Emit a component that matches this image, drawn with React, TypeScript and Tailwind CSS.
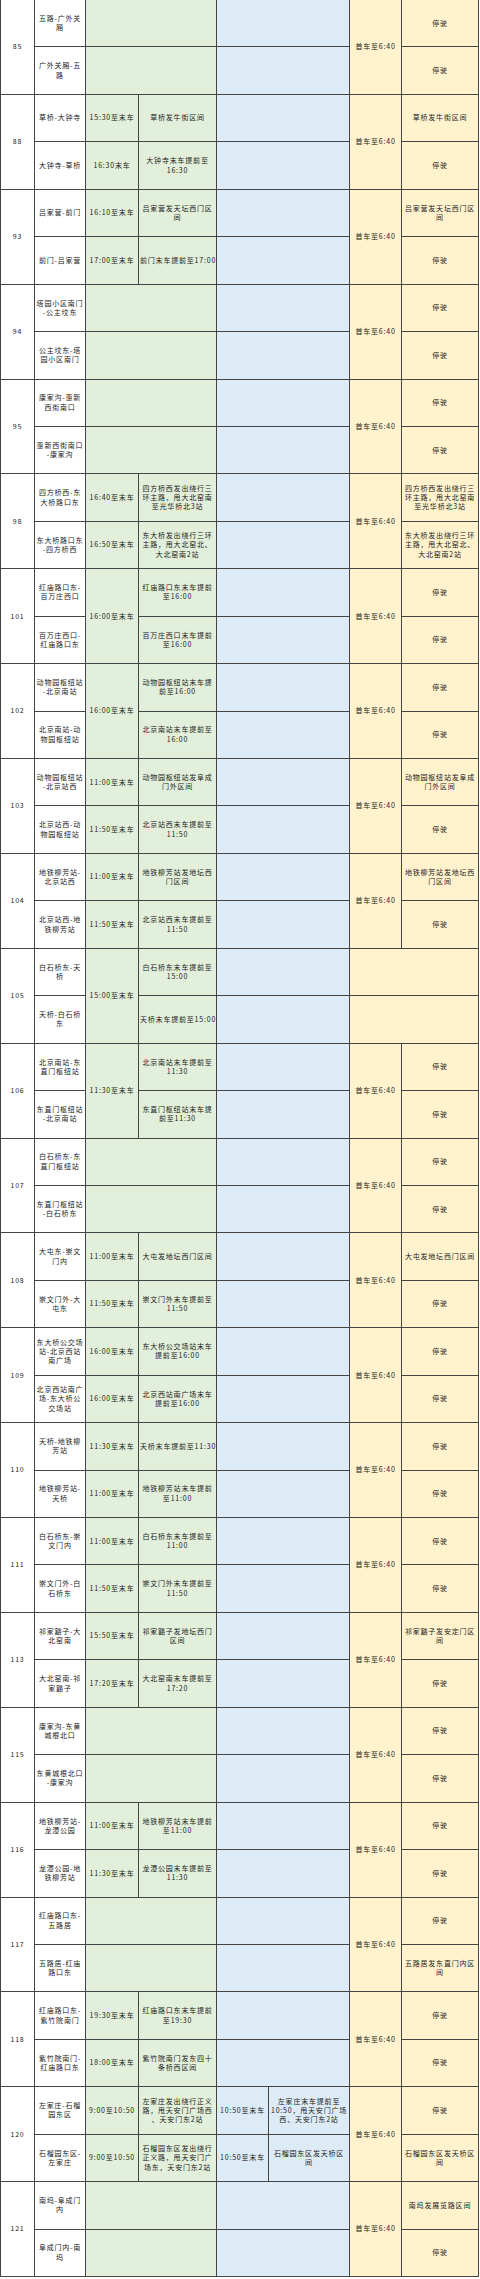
import React from 'react'

type Sub = {
  name: string
  /** green: time window + note; both absent = empty merged green cell */
  t?: string
  note?: string
  /** blue: only route 120 fills these */
  blueT?: string
  blueNote?: string
  /** last yellow column, defaults to 停驶 */
  c7?: string
}

type Route = {
  no: string
  /** time window shared by both directions */
  merged?: string
  /** yellow columns merged and left blank */
  yellowEmpty?: boolean
  rows: [Sub, Sub]
}

const ROUTES: Route[] = [
  { no: '85', rows: [{ name: '五路-广外关\n厢' }, { name: '广外关厢-五\n路' }] },
  {
    no: '88',
    rows: [
      { name: '草桥-大钟寺', t: '15:30至末车', note: '草桥发牛街区间', c7: '草桥发牛街区间' },
      { name: '大钟寺-草桥', t: '16:30末车', note: '大钟寺末车提前至\n16:30' }
    ]
  },
  {
    no: '93',
    rows: [
      { name: '吕家营-前门', t: '16:10至末车', note: '吕家营发天坛西门区\n间', c7: '吕家营发天坛西门区\n间' },
      { name: '前门-吕家营', t: '17:00至末车', note: '前门末车提前至17:00' }
    ]
  },
  { no: '94', rows: [{ name: '塔园小区南门\n-公主坟东' }, { name: '公主坟东-塔\n园小区南门' }] },
  { no: '95', rows: [{ name: '康家沟-惠新\n西街南口' }, { name: '惠新西街南口\n-康家沟' }] },
  {
    no: '98',
    rows: [
      {
        name: '四方桥西-东\n大桥路口东',
        t: '16:40至末车',
        note: '四方桥西发出绕行三\n环主路，甩大北窑南\n至光华桥北3站',
        c7: '四方桥西发出绕行三\n环主路，甩大北窑南\n至光华桥北3站'
      },
      {
        name: '东大桥路口东\n-四方桥西',
        t: '16:50至末车',
        note: '东大桥发出绕行三环\n主路，甩大北窑北、\n大北窑南2站',
        c7: '东大桥发出绕行三环\n主路，甩大北窑北、\n大北窑南2站'
      }
    ]
  },
  {
    no: '101',
    merged: '16:00至末车',
    rows: [
      { name: '红庙路口东-\n百万庄西口', note: '红庙路口东末车提前\n至16:00' },
      { name: '百万庄西口-\n红庙路口东', note: '百万庄西口末车提前\n至16:00' }
    ]
  },
  {
    no: '102',
    merged: '16:00至末车',
    rows: [
      { name: '动物园枢纽站\n-北京南站', note: '动物园枢纽站末车提\n前至16:00' },
      { name: '北京南站-动\n物园枢纽站', note: '北京南站末车提前至\n16:00' }
    ]
  },
  {
    no: '103',
    rows: [
      {
        name: '动物园枢纽站\n-北京站西',
        t: '11:00至末车',
        note: '动物园枢纽站发阜成\n门外区间',
        c7: '动物园枢纽站发阜成\n门外区间'
      },
      { name: '北京站西-动\n物园枢纽站', t: '11:50至末车', note: '北京站西末车提前至\n11:50' }
    ]
  },
  {
    no: '104',
    rows: [
      {
        name: '地铁柳芳站-\n北京站西',
        t: '11:00至末车',
        note: '地铁柳芳站发地坛西\n门区间',
        c7: '地铁柳芳站发地坛西\n门区间'
      },
      { name: '北京站西-地\n铁柳芳站', t: '11:50至末车', note: '北京站西末车提前至\n11:50' }
    ]
  },
  {
    no: '105',
    merged: '15:00至末车',
    yellowEmpty: true,
    rows: [
      { name: '白石桥东-天\n桥', note: '白石桥东末车提前至\n15:00' },
      { name: '天桥-白石桥\n东', note: '天桥末车提前至15:00' }
    ]
  },
  {
    no: '106',
    merged: '11:30至末车',
    rows: [
      { name: '北京南站-东\n直门枢纽站', note: '北京南站末车提前至\n11:30' },
      { name: '东直门枢纽站\n-北京南站', note: '东直门枢纽站末车提\n前至11:30' }
    ]
  },
  { no: '107', rows: [{ name: '白石桥东-东\n直门枢纽站' }, { name: '东直门枢纽站\n-白石桥东' }] },
  {
    no: '108',
    rows: [
      { name: '大屯东-崇文\n门内', t: '11:00至末车', note: '大屯发地坛西门区间', c7: '大屯发地坛西门区间' },
      { name: '崇文门外-大\n屯东', t: '11:50至末车', note: '崇文门外末车提前至\n11:50' }
    ]
  },
  {
    no: '109',
    rows: [
      { name: '东大桥公交场\n站-北京西站\n南广场', t: '16:00至末车', note: '东大桥公交场站末车\n提前至16:00' },
      { name: '北京西站南广\n场-东大桥公\n交场站', t: '16:00至末车', note: '北京西站南广场末车\n提前至16:00' }
    ]
  },
  {
    no: '110',
    rows: [
      { name: '天桥-地铁柳\n芳站', t: '11:30至末车', note: '天桥末车提前至11:30' },
      { name: '地铁柳芳站-\n天桥', t: '11:00至末车', note: '地铁柳芳站末车提前\n至11:00' }
    ]
  },
  {
    no: '111',
    rows: [
      { name: '白石桥东-崇\n文门内', t: '11:00至末车', note: '白石桥东末车提前至\n11:00' },
      { name: '崇文门外-白\n石桥东', t: '11:50至末车', note: '崇文门外末车提前至\n11:50' }
    ]
  },
  {
    no: '113',
    rows: [
      {
        name: '祁家豁子-大\n北窑南',
        t: '15:50至末车',
        note: '祁家豁子发地坛西门\n区间',
        c7: '祁家豁子发安定门区\n间'
      },
      { name: '大北窑南-祁\n家豁子', t: '17:20至末车', note: '大北窑南末车提前至\n17:20' }
    ]
  },
  { no: '115', rows: [{ name: '康家沟-东黄\n城根北口' }, { name: '东黄城根北口\n-康家沟' }] },
  {
    no: '116',
    rows: [
      { name: '地铁柳芳站-\n龙潭公园', t: '11:00至末车', note: '地铁柳芳站末车提前\n至11:00' },
      { name: '龙潭公园-地\n铁柳芳站', t: '11:30至末车', note: '龙潭公园末车提前至\n11:30' }
    ]
  },
  {
    no: '117',
    rows: [
      { name: '红庙路口东-\n五路居' },
      { name: '五路居-红庙\n路口东', c7: '五路居发东直门内区\n间' }
    ]
  },
  {
    no: '118',
    rows: [
      { name: '红庙路口东-\n紫竹院南门', t: '19:30至末车', note: '红庙路口东末车提前\n至19:30' },
      { name: '紫竹院南门-\n红庙路口东', t: '18:00至末车', note: '紫竹院南门发东四十\n条桥西区间' }
    ]
  },
  {
    no: '120',
    rows: [
      {
        name: '左家庄-石榴\n园东区',
        t: '9:00至10:50',
        note: '左家庄发出绕行正义\n路，甩天安门广场西\n、天安门东2站',
        blueT: '10:50至末车',
        blueNote: '左家庄末车提前至\n10:50，甩天安门广场\n西、天安门东2站'
      },
      {
        name: '石榴园东区-\n左家庄',
        t: '9:00至10:50',
        note: '石榴园东区发出绕行\n正义路，甩天安门广\n场东，天安门东2站',
        blueT: '10:50至末车',
        blueNote: '石榴园东区发天桥区\n间',
        c7: '石榴园东区发天桥区\n间'
      }
    ]
  },
  {
    no: '121',
    rows: [
      { name: '南坞-阜成门\n内', c7: '南坞发展览路区间' },
      { name: '阜成门内-南\n坞' }
    ]
  }
]

const cell =
  'border-r border-b border-[#454545] px-px text-center align-middle whitespace-pre leading-[9.3px]'
const white = `${cell} bg-white`
const green = `${cell} bg-[#e2efda]`
const blue = `${cell} bg-[#ddebf7]`
const yellow = `${cell} bg-[#fff2cc]`

function RouteRows({ route }: { route: Route }): React.JSX.Element {
  return (
    <>
      {route.rows.map((sub, i) => {
        const greenEmpty = !route.merged && sub.t === undefined && sub.note === undefined
        return (
          <tr key={i} className="h-[47.45px]">
            {i === 0 && (
              <td rowSpan={2} className={`${white} border-l`}>
                {route.no}
              </td>
            )}
            <td className={white}>{sub.name}</td>

            {/* green: time window + note */}
            {greenEmpty ? (
              <td colSpan={2} className={green} />
            ) : (
              <>
                {route.merged ? (
                  i === 0 && (
                    <td rowSpan={2} className={green}>
                      {route.merged}
                    </td>
                  )
                ) : (
                  <td className={green}>{sub.t}</td>
                )}
                <td className={green}>{sub.note}</td>
              </>
            )}

            {/* blue */}
            {sub.blueT ? (
              <>
                <td className={blue}>{sub.blueT}</td>
                <td className={blue}>{sub.blueNote}</td>
              </>
            ) : (
              <td colSpan={2} className={blue} />
            )}

            {/* yellow */}
            {route.yellowEmpty ? (
              <td colSpan={2} className={yellow} />
            ) : (
              <>
                {i === 0 && (
                  <td rowSpan={2} className={yellow}>
                    首车至6:40
                  </td>
                )}
                <td className={yellow}>{sub.c7 ?? '停驶'}</td>
              </>
            )}
          </tr>
        )
      })}
    </>
  )
}

export default function App(): React.JSX.Element {
  return (
    <div className="min-h-[2279px] w-[480px] bg-white">
      <table className="w-[479px] table-fixed border-separate border-spacing-0 font-['Noto_Sans_CJK_SC','Noto_Sans',sans-serif] text-[7px] tracking-[0.8px] text-[#222]">
        <colgroup>
          <col className="w-[35px]" />
          <col className="w-[51px]" />
          <col className="w-[53px]" />
          <col className="w-[78px]" />
          <col className="w-[52px]" />
          <col className="w-[81px]" />
          <col className="w-[52px]" />
          <col className="w-[77px]" />
        </colgroup>
        <tbody>
          {ROUTES.map((r) => (
            <RouteRows key={r.no} route={r} />
          ))}
        </tbody>
      </table>
    </div>
  )
}
